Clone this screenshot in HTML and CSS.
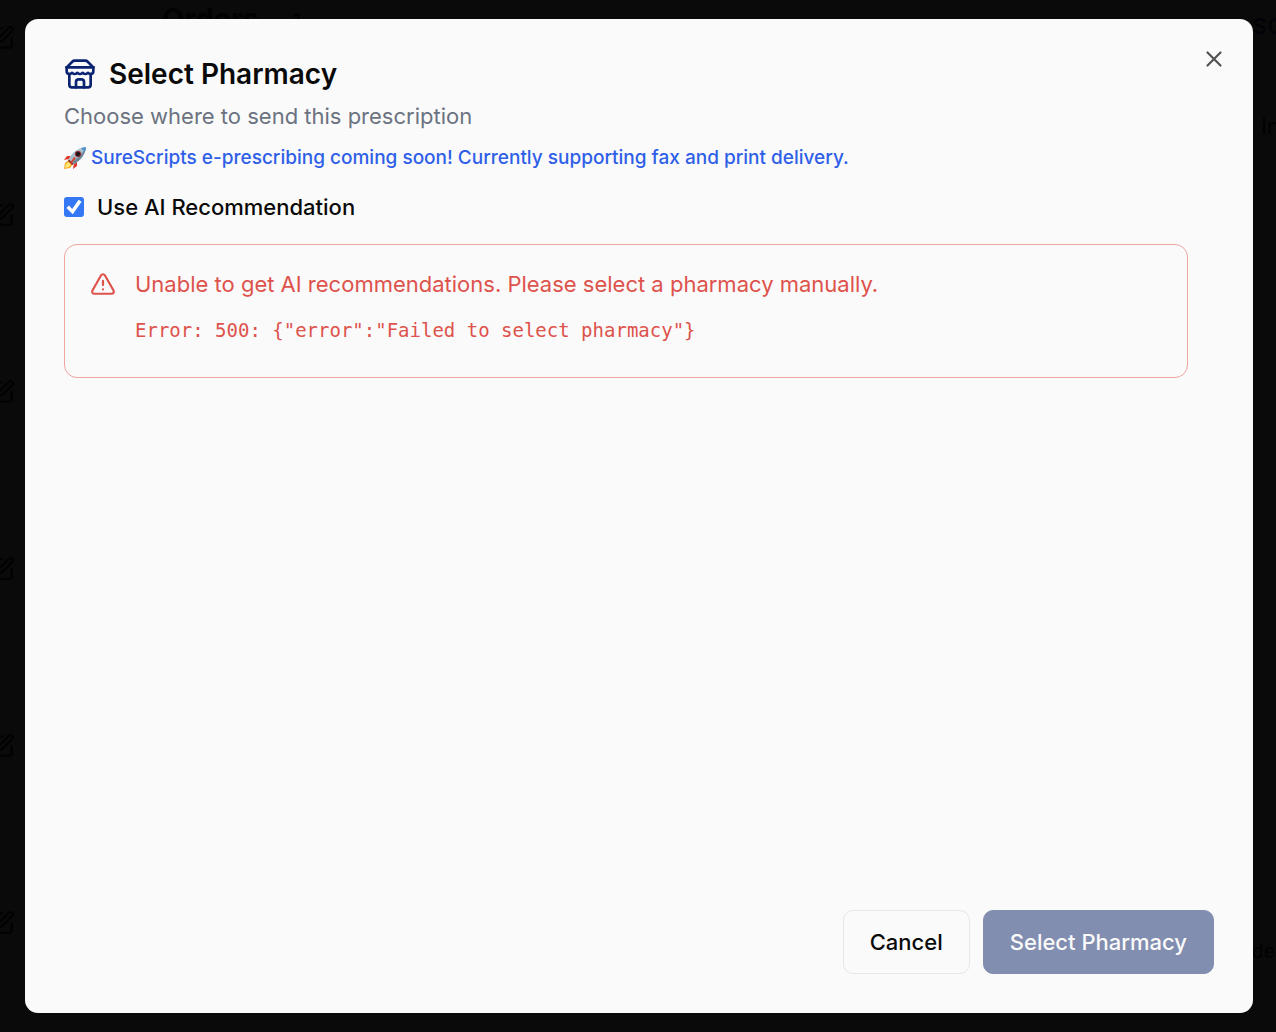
FILE: index.html
```html
<!DOCTYPE html>
<html lang="en">
<head>
<meta charset="utf-8">
<meta name="viewport" content="width=device-width, initial-scale=1">
<title>Select Pharmacy</title>
<link rel="stylesheet" href="styles.css">
</head>
<body>
<svg class="sprite" aria-hidden="true">
  <symbol id="edit" viewBox="0 0 24 24"><path d="M12 3H5a2 2 0 0 0-2 2v14a2 2 0 0 0 2 2h14a2 2 0 0 0 2-2v-7"/><path d="M18.375 2.625a1 1 0 0 1 3 3l-9.013 9.014a2 2 0 0 1-.853.505l-2.873.84a.5.5 0 0 1-.62-.62l.84-2.873a2 2 0 0 1 .506-.852z"/></symbol>
</svg>

<main class="page" aria-hidden="true">
  <div class="rail">
    <svg class="icon"><use href="#edit"/></svg>
    <svg class="icon"><use href="#edit"/></svg>
    <svg class="icon"><use href="#edit"/></svg>
    <svg class="icon"><use href="#edit"/></svg>
    <svg class="icon"><use href="#edit"/></svg>
    <svg class="icon"><use href="#edit"/></svg>
  </div>
  <h1 class="orders">Orders <span class="count">- 1</span></h1>
  <div class="aside">
    <p class="aside-title">sc</p>
    <p class="aside-label">In</p>
    <p class="aside-note">de</p>
  </div>
</main>

<div class="overlay">
  <section class="dialog" role="dialog" aria-modal="true" aria-labelledby="title" aria-describedby="subtitle">
    <button class="close" type="button" aria-label="Close">
      <svg class="icon" viewBox="0 0 24 24"><path d="M18 6 6 18M6 6l12 12"/></svg>
    </button>

    <header class="header">
      <h2 class="title" id="title">
        <svg class="icon store" viewBox="0 0 24 24"><path d="m2 7 4.41-4.41A2 2 0 0 1 7.83 2h8.34a2 2 0 0 1 1.42.59L22 7"/><path d="M4 12v8a2 2 0 0 0 2 2h12a2 2 0 0 0 2-2v-8"/><path d="M15 22v-4a2 2 0 0 0-2-2h-2a2 2 0 0 0-2 2v4"/><path d="M2 7h20"/><path d="M22 7v3a2 2 0 0 1-2 2a2.700 2.700 0 0 1-1.590-.630.700.700 0 0 0-.820 0A2.700 2.700 0 0 1 16 12a2.700 2.700 0 0 1-1.590-.630.700.700 0 0 0-.820 0A2.700 2.700 0 0 1 12 12a2.700 2.700 0 0 1-1.590-.630.700.700 0 0 0-.820 0A2.700 2.700 0 0 1 8 12a2.700 2.700 0 0 1-1.590-.630.700.700 0 0 0-.820 0A2.700 2.700 0 0 1 4 12a2 2 0 0 1-2-2V7"/></svg>
        Select Pharmacy
      </h2>
      <p class="subtitle" id="subtitle">Choose where to send this prescription</p>
      <p class="notice">
        <svg class="rocket" viewBox="0 0 22 22" aria-hidden="true">
          <path fill="#e2382b" d="M7 9 3 9 0 13l5-1zM13 15v4l-4 3 1-6z"/>
          <path fill="#f6a623" d="M5 13 1 16 0 22l6-1 3-4z"/>
          <path fill="#ffe873" d="M5 15l-3 2-1 4 4-1 2-3z"/>
          <path fill="#8b2f2b" d="M5 12l5 5-2 1-4-4z"/>
          <path fill="#a9bfcd" d="M5 12C8 5 14 1 22 0c-1 8-5 13-12 17z"/>
          <path fill="#6d8798" d="M22 0c-1 8-5 13-12 17l-2-2C14 11 19 6 22 0z"/>
          <path fill="#4a91d0" d="M17 1l5-1-1 5z"/>
          <circle cx="14" cy="7" r="3" fill="#8d1f24"/>
          <circle cx="14" cy="7" r="2" fill="#17171c"/>
          <path fill="#d8402f" d="M10 10l2 1-5 6-1-1z"/>
        </svg>
        SureScripts e-prescribing coming soon! Currently supporting fax and print delivery.
      </p>
    </header>

    <div class="body">
      <label class="option" for="use-ai">
        <input class="checkbox" id="use-ai" type="checkbox" checked>
        Use AI Recommendation
      </label>
      <div class="alert" role="alert">
        <svg class="icon" viewBox="0 0 24 24"><path d="m21.730 18-8-14a2 2 0 0 0-3.480 0l-8 14A2 2 0 0 0 4 21h16a2 2 0 0 0 1.730-3"/><path d="M12 9v4M12 17h.01"/></svg>
        <div class="alert-text">
          <p class="alert-message">Unable to get AI recommendations. Please select a pharmacy manually.</p>
          <p class="alert-detail">Error: 500: {"error":"Failed to select pharmacy"}</p>
        </div>
      </div>
    </div>

    <footer class="footer">
      <button class="button secondary" type="button">Cancel</button>
      <button class="button primary" type="button" disabled>Select Pharmacy</button>
    </footer>
  </section>
</div>
</body>
</html>
```
FILE: styles.css
```css
* { box-sizing: border-box; }

body {
  margin: 0;
  min-height: 100vh;
  background: #0a0a0a;
  color: #0a0a0a;
  font-family: Inter, "Liberation Sans", sans-serif;
  font-size: 22px;
  line-height: 32px;
}

h1, h2, p { margin: 0; }

.sprite { position: absolute; width: 0; height: 0; }

.icon {
  flex: none;
  width: 26px;
  height: 26px;
  fill: none;
  stroke: currentColor;
  stroke-width: 2;
  stroke-linecap: round;
  stroke-linejoin: round;
}

/* Page behind the dialog */
.page {
  position: fixed;
  inset: 0;
  display: flex;
  overflow: hidden;
  color: #020202;
}

.rail {
  display: flex;
  flex-direction: column;
  gap: 151px;
  width: 162px;
  padding-top: 25px;
}

.rail .icon { margin-left: -11px; }

.orders {
  flex: 1;
  padding-top: 3px;
  font-size: 29px;
  font-weight: 700;
}

.count { margin-left: 10px; font-size: 22px; font-weight: 400; }

.aside { width: 24px; white-space: nowrap; }
.aside-title { padding-top: 8px; color: #020208; font-size: 29px; }
.aside-label { padding: 70px 0 0 9px; }
.aside-note { padding-top: 794px; font-size: 19px; }

/* Dialog */
.overlay {
  position: relative;
  display: flex;
  min-height: 100vh;
  padding: 19px 23px 19px 25px;
}

.dialog {
  position: relative;
  display: flex;
  flex: 1;
  flex-direction: column;
  padding: 39px;
  border-radius: 13px;
  background: #fafafa;
}

.close {
  position: absolute;
  top: 27px;
  right: 26px;
  display: flex;
  padding: 0;
  border: 0;
  background: none;
  color: #525252;
}

.title {
  display: flex;
  align-items: center;
  gap: 13px;
  font-size: 28px;
  font-weight: 600;
}

.store { width: 32px; height: 32px; color: #0a2472; }

.subtitle { padding-top: 10px; color: #6b7280; }

.notice {
  display: flex;
  align-items: center;
  gap: 5px;
  padding-top: 10px;
  color: #2f5fe8;
  font-size: 19px;
  font-weight: 500;
}

.rocket { flex: none; width: 22px; height: 22px; }

.body { flex: 1; padding: 17px 26px 26px 0; }

.option {
  display: flex;
  align-items: center;
  gap: 13px;
  width: fit-content;
  font-weight: 500;
}

.checkbox {
  width: 20px;
  height: 20px;
  margin: 0;
  border-radius: 3px;
  background: #3478f6;
  appearance: none;
}

.checkbox:checked::before {
  content: "";
  display: block;
  height: 20px;
  background: #fff;
  clip-path: polygon(12% 55%, 25% 43%, 41% 60%, 73% 14%, 88% 24%, 44% 86%);
}

.alert {
  display: flex;
  gap: 19px;
  margin-top: 21px;
  padding: 23px 25px 31px;
  border: 1px solid #f0a5a2;
  border-radius: 13px;
  color: #de524c;
}

.alert .icon { margin-top: 3px; }

.alert-text { min-width: 0; }

.alert-detail {
  padding-top: 14px;
  font-family: "DejaVu Sans Mono", monospace;
  font-size: 19px;
}

.footer {
  display: flex;
  justify-content: flex-end;
  gap: 13px;
}

.button {
  height: 64px;
  padding: 0 26px;
  border: 1px solid #e5e7eb;
  border-radius: 10px;
  background: #fafafa;
  color: #0a0a0a;
  font: inherit;
  font-weight: 500;
}

.primary {
  border-color: #828eb0;
  background: #828eb0;
  color: #fafafa;
}
```
